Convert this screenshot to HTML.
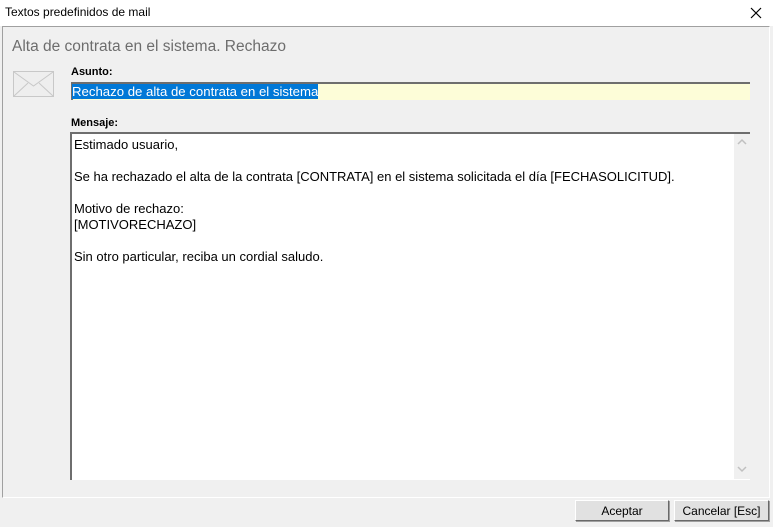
<!DOCTYPE html><html><head><style>
body{margin:0;width:773px;height:527px;background:#f0f0f0;font-family:"Liberation Sans",sans-serif;position:relative;overflow:hidden}
.a{position:absolute}
.t{font-size:12px;color:#000}
.btn{position:absolute;top:500px;height:21px;background:#e1e1e1;border:1px solid #fff;border-right-color:#696969;border-bottom-color:#696969;box-shadow:1px 1px 0 #a0a0a0;font-size:12px;text-align:center;line-height:21px;box-sizing:border-box}
</style></head><body>
<div class="a" style="left:0;top:0;width:773px;height:26px;background:#fff"></div>
<div class="a t" style="left:5px;top:5px">Textos predefinidos de mail</div>
<svg class="a" style="left:750px;top:7px" width="12" height="12"><path d="M1 1L11 11M11 1L1 11" stroke="#000" stroke-width="1.2"/></svg>
<div class="a" style="left:2px;top:26px;width:766px;height:470px;border:1px solid #a0a0a0;border-right-color:#fff;border-bottom-color:#fff;background:#f0f0f0"></div>
<div class="a" style="left:12px;top:38px;font-size:15.5px;color:#6d6d6d">Alta de contrata en el sistema. Rechazo</div>
<svg class="a" style="left:13px;top:71px" width="42" height="27"><rect x="0.5" y="0.5" width="40" height="25" fill="#eee" stroke="#c8c8c8"/><path d="M1 1L20.5 15L40 1M1 25L15 12M40 25L26 12" fill="none" stroke="#c8c8c8"/></svg>
<div class="a t" style="left:71px;top:66px;font-weight:bold;font-size:11px">Asunto:</div>
<div class="a" style="left:71px;top:82px;width:679px;height:18px;background:#fdfdd8;border-top:2px solid #6e6e6e;border-left:2px solid #6e6e6e;box-sizing:border-box"></div>
<div class="a t" style="left:72px;top:84px;background:#0078d7;color:#fff;font-size:13.2px;line-height:15px">Rechazo de alta de contrata en el sistema</div>
<div class="a t" style="left:71px;top:117px;font-weight:bold;font-size:11px">Mensaje:</div>
<div class="a" style="left:70px;top:132px;width:680px;height:348px;background:#fff;border-top:2px solid #6e6e6e;border-left:2px solid #6e6e6e;box-sizing:border-box"></div>
<div class="a" style="left:734px;top:134px;width:16px;height:345px;background:#f0f0f0"></div>
<svg class="a" style="left:737px;top:138px" width="10" height="8"><path d="M1 6L5 2L9 6" fill="none" stroke="#c0c0c0" stroke-width="1.5"/></svg>
<svg class="a" style="left:737px;top:465px" width="10" height="8"><path d="M1 2L5 6L9 2" fill="none" stroke="#c0c0c0" stroke-width="1.5"/></svg>
<div class="a" style="left:74px;top:137px;font-size:13px;line-height:16px;color:#000">Estimado usuario,<br><br>Se ha rechazado el alta de la contrata [CONTRATA] en el sistema solicitada el día [FECHASOLICITUD].<br><br>Motivo de rechazo:<br>[MOTIVORECHAZO]<br><br>Sin otro particular, reciba un cordial saludo.</div>
<div class="btn" style="left:575px;width:94px">Aceptar</div>
<div class="btn" style="left:674px;width:95px">Cancelar [Esc]</div>
</body></html>
